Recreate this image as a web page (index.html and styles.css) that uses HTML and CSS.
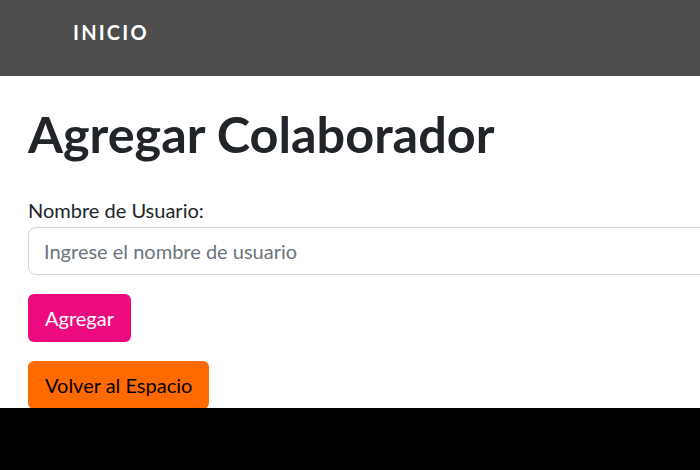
FILE: index.html
```html
<!DOCTYPE html>
<html lang="es">
<head>
<meta charset="utf-8">
<title>Agregar Colaborador</title>
<link rel="stylesheet" href="styles.css">
</head>
<body>
<div class="page">
  <nav class="navbar">
    <a class="nav-link" href="#">INICIO</a>
  </nav>
  <main class="container">
    <h1 class="title">Agregar Colaborador</h1>
    <form class="form">
      <label class="label" for="usuario">Nombre de Usuario:</label>
      <input class="input" id="usuario" type="text" placeholder="Ingrese el nombre de usuario">
      <button class="btn btn-pink" type="button">Agregar</button>
    </form>
    <button class="btn btn-orange" type="button">Volver al Espacio</button>
  </main>
</div>
</body>
</html>
```

FILE: styles.css
```css
html, body {
  margin: 0;
  padding: 0;
  background: #000;
  overflow: hidden;
}
body {
  font-family: Lato, "Liberation Sans", sans-serif;
  color: #212529;
}
.page {
  height: 408px;
  width: 860px;
  background: #fff;
  overflow: hidden;
}
.navbar {
  height: 76px;
  background: #4d4d4d;
  box-sizing: border-box;
  padding: 20px 0 0 73px;
}
.nav-link {
  color: #fff;
  text-decoration: none;
  font-weight: 700;
  font-size: 20px;
  letter-spacing: 2.2px;
  line-height: 24px;
}
.container {
  padding: 0 28px;
}
.title {
  margin: 28px 0 34px;
  font-size: 50.4px;
  font-weight: 700;
  line-height: 1.2;
}
.form {
  display: flex;
  flex-direction: column;
  align-items: flex-start;
}
.label {
  font-size: 20px;
  line-height: 24px;
  margin-bottom: 5px;
}
.input {
  width: 100%;
  box-sizing: border-box;
  height: 48px;
  padding: 8px 15px;
  font-family: inherit;
  font-size: 20px;
  color: #212529;
  border: 1px solid #ced4da;
  border-radius: 8px;
  margin-bottom: 19px;
}
.input::placeholder {
  color: #6c757d;
}
.btn {
  font-family: inherit;
  font-size: 20px;
  line-height: 30px;
  padding: 8px 16px;
  border: 1px solid transparent;
  border-radius: 6px;
  cursor: pointer;
  display: block;
}
.btn-pink {
  background: #ec0b7e;
  color: #fff;
  margin-bottom: 19px;
}
.btn-orange {
  background: #ff6a00;
  color: #000;
}
```
